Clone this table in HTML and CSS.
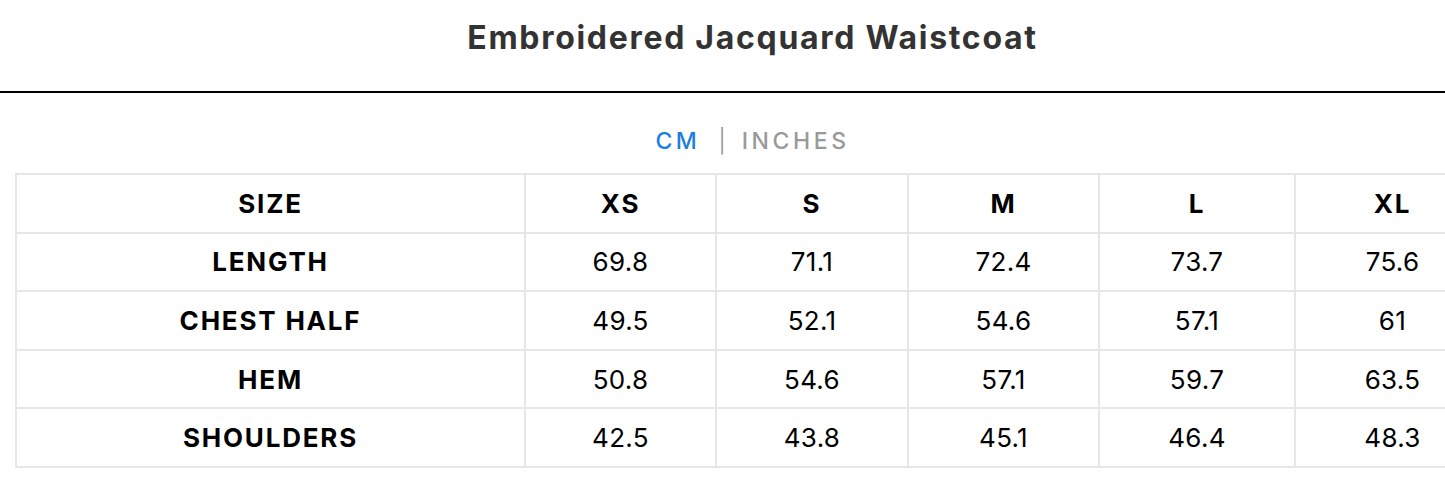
FILE: index.html
```html
<!DOCTYPE html>
<html lang="en">

<head>
  <meta charset="UTF-8">
  <meta name="viewport" content="width=device-width, initial-scale=1.0">
  <title>Size Guide</title>
  <link rel="stylesheet" href="styles.css">
</head>

<body>
  <div class="size-guide">
    <div class="guide-header">
      <h1 class="guide-title">Embroidered Jacquard Waistcoat</h1>
    </div>

    <div class="units">
      <span class="unit unit-active">CM</span>
      <span class="unit-divider">|</span>
      <span class="unit">INCHES</span>
    </div>

    <table class="size-table">
      <colgroup>
        <col class="col-label">
        <col class="col-xs">
        <col class="col-s">
        <col class="col-m">
        <col class="col-l">
        <col class="col-xl">
      </colgroup>
      <tr>
        <th>SIZE</th>
        <th>XS</th>
        <th>S</th>
        <th>M</th>
        <th>L</th>
        <th>XL</th>
      </tr>
      <tr>
        <th>LENGTH</th>
        <td>69.8</td>
        <td>71.1</td>
        <td>72.4</td>
        <td>73.7</td>
        <td>75.6</td>
      </tr>
      <tr>
        <th>CHEST HALF</th>
        <td>49.5</td>
        <td>52.1</td>
        <td>54.6</td>
        <td>57.1</td>
        <td>61</td>
      </tr>
      <tr>
        <th>HEM</th>
        <td>50.8</td>
        <td>54.6</td>
        <td>57.1</td>
        <td>59.7</td>
        <td>63.5</td>
      </tr>
      <tr>
        <th>SHOULDERS</th>
        <td>42.5</td>
        <td>43.8</td>
        <td>45.1</td>
        <td>46.4</td>
        <td>48.3</td>
      </tr>
    </table>
  </div>
</body>

</html>
```

FILE: styles.css
```css
* {
  margin: 0;
  padding: 0;
  box-sizing: border-box;
}

body {
  background-color: #ffffff;
  font-family: Inter, "Open Sans", sans-serif;
  color: #000000;
  overflow: hidden;
}

/* the guide is wider than the window, so the right edge is cut */
.size-guide {
  width: 1505px;
}

.guide-header {
  height: 93px;
  padding-top: 19px;
  border-bottom: 2px solid #000000;
}

.guide-title {
  text-align: center;
  font-size: 32px;
  line-height: 38px;
  font-weight: 700;
  color: #333333;
  letter-spacing: 1.7px;
}

.units {
  margin-top: 34px;
  margin-bottom: 18px;
  display: flex;
  justify-content: center;
  align-items: center;
  height: 28px;
  font-size: 23px;
  letter-spacing: 3.6px;
}

.unit {
  color: #999999;
  font-weight: 500;
}

.unit-active {
  color: #1a7de0;
}

.unit-divider {
  color: #888888;
  margin: 0 16px 0 18px;
  font-weight: 300;
  letter-spacing: 0;
}

.size-table {
  margin-left: 15px;
  width: 1474px;
  table-layout: fixed;
  border-collapse: separate;
  border-spacing: 0;
  border-top: 2px solid #e6e6e6;
  border-left: 2px solid #e6e6e6;
}

.col-label {
  width: 509px;
}

.col-xs {
  width: 191px;
}

.col-s {
  width: 192px;
}

.col-m {
  width: 191px;
}

.col-l {
  width: 196px;
}

.col-xl {
  width: 195px;
}

.size-table th,
.size-table td {
  height: 58.6px;
  text-align: center;
  vertical-align: middle;
  border-right: 2px solid #e6e6e6;
  border-bottom: 2px solid #e6e6e6;
  font-size: 26px;
  color: #000000;
}

.size-table th {
  font-weight: 700;
  letter-spacing: 1.8px;
}

.size-table td {
  font-weight: 400;
  letter-spacing: 0.3px;
}
```
